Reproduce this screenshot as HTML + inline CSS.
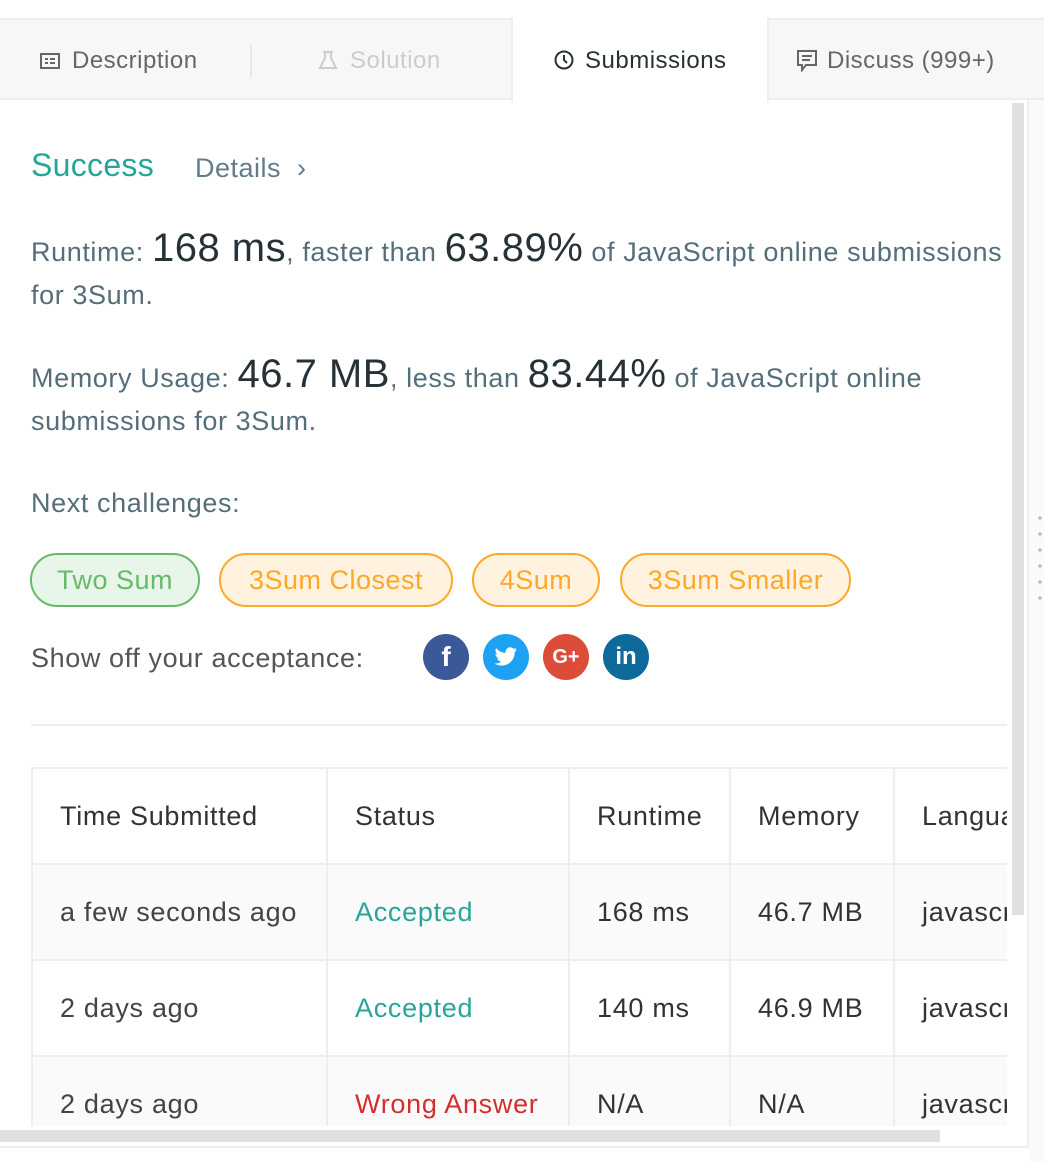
<!DOCTYPE html>
<html><head><meta charset="utf-8"><style>
*{margin:0;padding:0;box-sizing:border-box}
body{width:1044px;height:1162px;background:#fff;font-family:"Liberation Sans",sans-serif;position:relative;overflow:hidden}
.a{position:absolute;white-space:nowrap}
.tabs{position:absolute;left:0;top:18px;width:1044px;height:82px;background:#f7f7f7;border-top:2px solid #eee;border-bottom:2px solid #eee}
.tab{position:absolute;top:2px;height:80px;line-height:78px;font-size:24px;letter-spacing:0.5px;color:#666}
.t{font-size:27px;letter-spacing:0.6px;color:#546e7a}
.big{font-size:40px;letter-spacing:0.5px;color:#263238}
.pill{position:absolute;top:553px;height:54px;border-radius:27px;border:2px solid #ffa726;background:#fff3e0;color:#ffa726;font-size:27px;letter-spacing:0.5px;line-height:50px;text-align:center}
.soc{position:absolute;top:634px;width:46px;height:46px;border-radius:50%;color:#fff;font-weight:bold;text-align:center;line-height:46px;font-size:24px}
table{position:absolute;left:31px;top:767px;border-collapse:collapse;font-size:27px;letter-spacing:0.7px;color:#333;table-layout:fixed;width:1062px}
td{border:2px solid #eee;padding-left:27px;height:96px;white-space:nowrap;overflow:hidden}
.g{background:#fafafa}
</style></head><body>
<div class="tabs">
 <div class="tab" style="left:40px"><svg width="20" height="16" style="vertical-align:-1px;margin-right:12px"><rect x="1" y="1" width="18" height="14" fill="none" stroke="#666" stroke-width="2"/><path d="M5 6h3M10 6h5M5 10h3M10 10h5" stroke="#666" stroke-width="2"/></svg>Description</div>
 <div style="position:absolute;left:250px;top:24px;width:2px;height:34px;background:#e8e8e8"></div>
 <div class="tab" style="left:318px;color:#ccc"><svg width="20" height="20" style="vertical-align:-2px;margin-right:12px"><path d="M7 2v6L2 18h16L13 8V2M5 2h10" fill="none" stroke="#ccc" stroke-width="2"/></svg>Solution</div>
 <div style="position:absolute;left:511px;top:-2px;width:258px;height:84px;background:#fff;border-left:2px solid #eee;border-right:2px solid #eee"></div>
 <div class="tab" style="left:553px;color:#263238"><svg width="22" height="22" style="vertical-align:-3px;margin-right:10px"><circle cx="11" cy="11" r="8.5" fill="none" stroke="#263238" stroke-width="2"/><path d="M11 6v5l3 3" fill="none" stroke="#263238" stroke-width="2"/></svg>Submissions</div>
 <div class="tab" style="left:797px"><svg width="20" height="22" style="vertical-align:-4px;margin-right:10px"><path d="M1 1h18v14H9l-4 5v-5H1z" fill="none" stroke="#666" stroke-width="2"/><path d="M5 6h10M5 10h8" stroke="#666" stroke-width="2"/></svg>Discuss (999+)</div>
</div>
<div style="position:absolute;left:1027px;top:100px;width:2px;height:1048px;background:#eee"></div>
<div style="position:absolute;left:1029px;top:100px;width:15px;height:1062px;background:#fafafa"></div>
<div style="position:absolute;left:0;top:1146px;width:1029px;height:2px;background:#eee"></div>
<div style="position:absolute;left:1012px;top:103px;width:12px;height:812px;background:#e0e0e0"></div>
<div style="position:absolute;left:0;top:1130px;width:940px;height:12px;background:#e0e0e0"></div>
<div class="a" style="left:1038px;top:510px;width:4px;height:90px;background:radial-gradient(circle,#b0bec5 1.6px,transparent 2px) 0 0/4px 16px"></div>

<div class="a" style="left:31px;top:147px;font-size:32px;letter-spacing:0.3px;color:#26a69a">Success</div>
<div class="a" style="left:195px;top:153px;font-size:27px;letter-spacing:0.5px;color:#607d8b">Details &nbsp;›</div>

<div style="position:absolute;left:31px;top:227px;width:976px;overflow:hidden;line-height:43px" class="t">
<div style="white-space:nowrap">Runtime: <span class="big">168 ms</span>, faster than <span class="big">63.89%</span> of JavaScript online submissions</div>
<div>for 3Sum.</div></div>
<div style="position:absolute;left:31px;top:353px;width:976px;line-height:43px" class="t">
<div style="white-space:nowrap">Memory Usage: <span class="big">46.7 MB</span>, less than <span class="big">83.44%</span> of JavaScript online</div>
<div>submissions for 3Sum.</div></div>
<div class="a t" style="left:31px;top:488px">Next challenges:</div>

<div class="pill" style="left:30px;width:170px;border-color:#66bb6a;background:#e8f5e9;color:#66bb6a">Two Sum</div>
<div class="pill" style="left:219px;width:234px">3Sum Closest</div>
<div class="pill" style="left:472px;width:128px">4Sum</div>
<div class="pill" style="left:620px;width:231px">3Sum Smaller</div>

<div class="a t" style="left:31px;top:643px;color:#555">Show off your acceptance:</div>
<div class="soc" style="left:423px;background:#3b5998;font-size:28px">f</div>
<div class="soc" style="left:483px;background:#1da1f2"><svg width="24" height="20" viewBox="0 0 24 20" style="margin-top:13px"><path d="M23 2.5c-.8.4-1.7.6-2.6.7.9-.6 1.6-1.4 2-2.5-.9.5-1.900.9-2.900 1.1C18.6.9 17.4.3 16.1.3c-2.5 0-4.6 2.1-4.6 4.6 0 .4 0 .7.1 1C7.8 5.7 4.4 3.9 2.1 1.1c-.4.7-.6 1.5-.6 2.3 0 1.6.8 3 2 3.8-.8 0-1.5-.2-2.1-.6v.1c0 2.2 1.6 4.1 3.7 4.5-.4.1-.8.2-1.2.2-.3 0-.6 0-.9-.1.6 1.8 2.3 3.2 4.3 3.2-1.6 1.2-3.6 2-5.7 2H.5c2 1.3 4.5 2.1 7.1 2.1 8.5 0 13.1-7 13.1-13.1v-.6c.9-.6 1.7-1.4 2.3-2.4z" fill="#fff"/></svg></div>
<div class="soc" style="left:543px;background:#dd4b39;font-size:20px">G+</div>
<div class="soc" style="left:603px;background:#0e6a9a;font-size:24px">in</div>

<div style="position:absolute;left:31px;top:724px;width:976px;height:2px;background:#eee"></div>

<div style="position:absolute;left:0;top:760px;width:1007px;height:366px;overflow:hidden">
<table style="top:7px">
<colgroup><col style="width:295px"><col style="width:242px"><col style="width:161px"><col style="width:164px"><col style="width:200px"></colgroup>
<tr><td>Time Submitted</td><td>Status</td><td>Runtime</td><td>Memory</td><td>Language</td></tr>
<tr class="g"><td style="color:#444">a few seconds ago</td><td style="color:#26a69a">Accepted</td><td>168 ms</td><td>46.7 MB</td><td>javascript</td></tr>
<tr><td style="color:#444">2 days ago</td><td style="color:#26a69a">Accepted</td><td>140 ms</td><td>46.9 MB</td><td>javascript</td></tr>
<tr class="g"><td style="color:#444">2 days ago</td><td style="color:#d32f2f">Wrong Answer</td><td>N/A</td><td>N/A</td><td>javascript</td></tr>
</table></div>
</body></html>
